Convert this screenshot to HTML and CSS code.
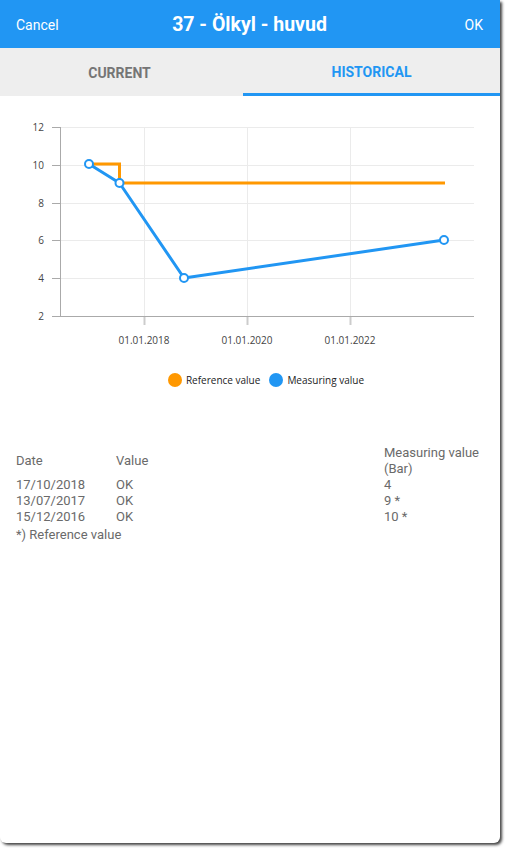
FILE: index.html
```
<!DOCTYPE html>
<html>
<head>
<meta charset="utf-8">
<link rel="stylesheet" href="styles.css">
</head>
<body>
<div class="dialog">
  <header class="topbar">
    <span class="btn">Cancel</span>
    <h1 class="title">37 - Ölkyl - huvud</h1>
    <span class="btn ok">OK</span>
  </header>
  <nav class="tabs">
    <div class="tab">CURRENT</div>
    <div class="tab active">HISTORICAL</div>
  </nav>
  <section class="chart">
    <svg class="plot" width="500" height="256" viewBox="0 0 500 256">
      <g class="grid" stroke="#ebebeb" stroke-width="1">
        <line x1="60" y1="31.5" x2="474" y2="31.5"/>
        <line x1="60" y1="69.5" x2="474" y2="69.5"/>
        <line x1="60" y1="107.5" x2="474" y2="107.5"/>
        <line x1="60" y1="144.5" x2="474" y2="144.5"/>
        <line x1="60" y1="182.5" x2="474" y2="182.5"/>
        <line x1="144.5" y1="31" x2="144.5" y2="220"/>
        <line x1="247.5" y1="31" x2="247.5" y2="220"/>
        <line x1="350.5" y1="31" x2="350.5" y2="220"/>
      </g>
      <g stroke="#aaaaaa" stroke-width="1">
        <line x1="60.5" y1="31" x2="60.5" y2="220.5"/>
        <line x1="60" y1="220.5" x2="474" y2="220.5"/>
        <line x1="52" y1="31.5" x2="60" y2="31.5"/>
        <line x1="52" y1="69.5" x2="60" y2="69.5"/>
        <line x1="52" y1="107.5" x2="60" y2="107.5"/>
        <line x1="52" y1="144.5" x2="60" y2="144.5"/>
        <line x1="52" y1="182.5" x2="60" y2="182.5"/>
        <line x1="52" y1="220.5" x2="60" y2="220.5"/>
      </g>
      <g stroke="#cccccc" stroke-width="2">
        <line x1="144.5" y1="221" x2="144.5" y2="229"/>
        <line x1="247.5" y1="221" x2="247.5" y2="229"/>
        <line x1="350.5" y1="221" x2="350.5" y2="229"/>
      </g>
      <g class="ylab" text-anchor="end">
        <text x="44" y="35">12</text>
        <text x="44" y="73">10</text>
        <text x="44" y="111">8</text>
        <text x="44" y="148">6</text>
        <text x="44" y="186">4</text>
        <text x="44" y="224">2</text>
      </g>
      <g class="xlab" text-anchor="middle">
        <text x="144" y="248">01.01.2018</text>
        <text x="247" y="248">01.01.2020</text>
        <text x="350" y="248">01.01.2022</text>
      </g>
      <polyline points="89,68 119.5,68 119.5,87 445,87" fill="none" stroke="#ff9800" stroke-width="3"/>
      <polyline points="89,68 119.5,87 184,182 444,144" fill="none" stroke="#2196f3" stroke-width="3" stroke-linejoin="round"/>
      <g fill="#ffffff" stroke="#2196f3" stroke-width="2">
        <circle cx="89" cy="68" r="4"/>
        <circle cx="119.5" cy="87" r="4"/>
        <circle cx="184" cy="182" r="4"/>
        <circle cx="444" cy="144" r="4"/>
      </g>
    </svg>
    <div class="legend">
      <span class="item"><span class="dot orange"></span>Reference value</span>
      <span class="item"><span class="dot blue"></span>Measuring value</span>
    </div>
  </section>
  <section class="history">
    <div class="row head">
      <span class="c1">Date</span>
      <span class="c2">Value</span>
      <span class="c3">Measuring value<br>(Bar)</span>
    </div>
    <div class="row"><span class="c1">17/10/2018</span><span class="c2">OK</span><span class="c3">4</span></div>
    <div class="row"><span class="c1">13/07/2017</span><span class="c2">OK</span><span class="c3">9 *</span></div>
    <div class="row"><span class="c1">15/12/2016</span><span class="c2">OK</span><span class="c3">10 *</span></div>
    <div class="note">*) Reference value</div>
  </section>
</div>
</body>
</html>
```
FILE: styles.css
```
html, body {
  margin: 0;
  padding: 0;
  background: #ffffff;
}
body {
  width: 505px;
  height: 848px;
  overflow: hidden;
  font-family: Roboto, "Liberation Sans", sans-serif;
}
.dialog {
  width: 500px;
  height: 843px;
  background: #ffffff;
  border-radius: 0 0 6px 6px;
  box-shadow: 2px 2px 3px rgba(0, 0, 0, 0.75);
  overflow: hidden;
}
.topbar {
  height: 48px;
  background: #2196f3;
  display: grid;
  grid-template-columns: 1fr auto 1fr;
  align-items: center;
  padding: 2px 17px 0 16px;
  box-sizing: border-box;
  color: #ffffff;
}
.btn {
  font-size: 14px;
}
.btn.ok {
  justify-self: end;
}
.title {
  margin: 0 0 2px 0;
  font-size: 19.5px;
  font-weight: 700;
}
.tabs {
  height: 48px;
  background: #eeeeee;
  display: grid;
  grid-template-columns: 243px 1fr;
}
.tab {
  display: flex;
  align-items: center;
  justify-content: center;
  font-size: 14px;
  font-weight: 700;
  color: #757575;
  padding-top: 1px;
  padding-right: 4px;
  box-sizing: border-box;
}
.tab.active {
  color: #2196f3;
  border-bottom: 3px solid #2196f3;
  padding-top: 3px;
  padding-right: 0;
  padding-left: 0;
}
.chart {
  display: flex;
  flex-direction: column;
}
.plot {
  display: block;
}
.ylab text, .xlab text {
  font-family: "Open Sans", "Liberation Sans", sans-serif;
  font-size: 10px;
  fill: #444444;
}
.legend {
  display: flex;
  justify-content: center;
  gap: 9px;
  margin-top: 21px;
  padding-left: 32px;
  font-family: "Open Sans", "Liberation Sans", sans-serif;
  font-size: 10px;
  color: #222222;
}
.item {
  display: flex;
  align-items: center;
}
.dot {
  width: 14px;
  height: 14px;
  border-radius: 50%;
  margin-right: 4px;
}
.dot.orange { background: #ff9800; }
.dot.blue { background: #2196f3; }
.history {
  margin-top: 58px;
  padding-left: 16px;
  font-size: 13px;
  color: #6a6a6a;
  line-height: 16px;
}
.row {
  display: grid;
  grid-template-columns: 100px 268px 1fr;
  align-items: center;
}
.note {
  margin-top: 2px;
}
```
